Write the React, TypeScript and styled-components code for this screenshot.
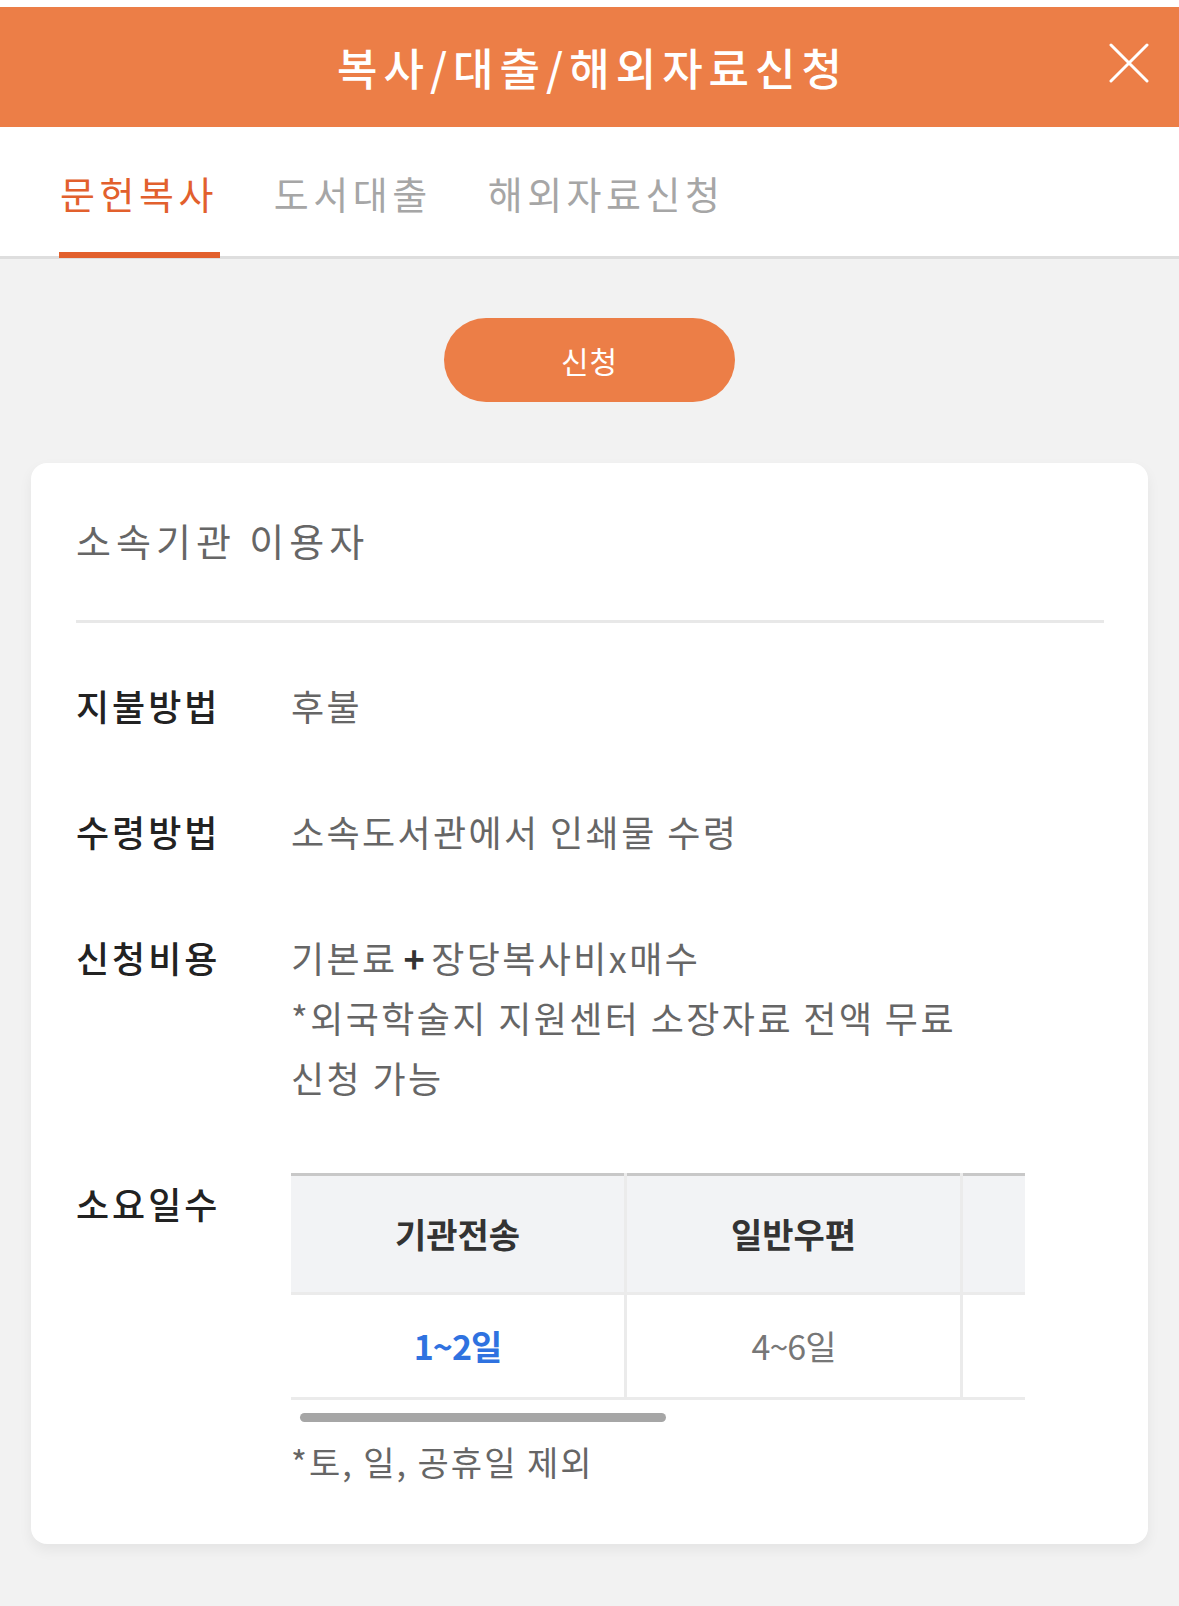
import React from 'react';
import styled, { createGlobalStyle } from 'styled-components';

const GlobalStyle = createGlobalStyle`
  html, body {
    margin: 0;
    padding: 0;
    background: #f2f2f2;
  }
  body {
    font-family: "Noto Sans CJK KR", "Noto Sans", sans-serif;
    -webkit-font-smoothing: antialiased;
  }
`;

const Page = styled.div`
  width: 1179px;
  min-height: 1606px;
  background: #f2f2f2;
  border-top: 7px solid #fff;
  box-sizing: border-box;
`;

const Header = styled.header`
  position: relative;
  height: 120px;
  background: #ec7e47;
  display: flex;
  align-items: center;
  justify-content: center;
`;

const Title = styled.h1`
  margin: 0 0 0 6px;
  color: #fff;
  font-size: 44px;
  font-weight: 500;
  letter-spacing: 6px;
  line-height: 1;
`;

const CloseButton = styled.button`
  position: absolute;
  right: 30px;
  top: 36px;
  width: 40px;
  height: 40px;
  padding: 0;
  border: 0;
  background: transparent;
  cursor: pointer;
`;

const TabBar = styled.nav`
  display: flex;
  gap: 56px;
  padding: 0 0 0 60px;
  height: 132px;
  background: #fff;
  border-bottom: 3px solid #dedede;
  box-sizing: border-box;
`;

const Tab = styled.div<{ $active?: boolean }>`
  position: relative;
  display: flex;
  align-items: center;
  height: 100%;
  font-size: 38px;
  letter-spacing: 4.5px;
  color: ${({ $active }) => ($active ? '#e2602d' : '#a6a6a6')};
  line-height: 1;
  padding-top: 2px;
  box-sizing: border-box;
  &::after {
    content: '';
    display: ${({ $active }) => ($active ? 'block' : 'none')};
    position: absolute;
    left: -1px;
    right: -2px;
    bottom: -2px;
    height: 6px;
    background: #e2602d;
  }
`;

const Body = styled.main`
  display: flex;
  flex-direction: column;
  align-items: center;
  padding: 59px 31px 0;
`;

const ApplyButton = styled.button`
  width: 291px;
  height: 84px;
  border: 0;
  border-radius: 42px;
  background: #ec7e47;
  color: #fff;
  font-family: inherit;
  font-size: 30px;
  letter-spacing: 1px;
  cursor: pointer;
`;

const Card = styled.section`
  align-self: stretch;
  margin-top: 61px;
  background: #fff;
  border-radius: 16px;
  box-shadow: 0 6px 14px rgba(0, 0, 0, 0.06);
  padding: 47px 44px 53px 45px;
`;

const CardTitle = styled.h2`
  margin: 0;
  font-size: 38px;
  font-weight: 400;
  letter-spacing: 5px;
  color: #666;
  line-height: 59px;
  padding-bottom: 51px;
  border-bottom: 3px solid #e8e8e8;
`;

const InfoList = styled.dl`
  margin: 52px 0 0;
  display: flex;
  flex-direction: column;
  gap: 66px;
`;

const InfoRow = styled.div`
  display: grid;
  grid-template-columns: 215px 1fr;
  font-size: 36px;
  line-height: 60px;
`;

const Label = styled.dt`
  font-weight: 500;
  letter-spacing: 3px;
  color: #222;
`;

const Value = styled.dd`
  margin: 0;
  color: #666;
  letter-spacing: 2.4px;
  max-width: 700px;
  word-break: keep-all;
`;

const Plus = styled.span`
  color: #333;
  font-weight: 700;
  margin: 0 4px 0 6px;
`;

const TableScroll = styled.div`
  width: 734px;
  overflow: hidden;
  letter-spacing: 0;
`;

const Table = styled.table`
  border-collapse: collapse;
  table-layout: fixed;
  width: 1002px;
  border-top: 3px solid #c8c8c8;
  border-bottom: 3px solid #ebebeb;
`;

const HeadCell = styled.th`
  width: 333px;
  height: 116px;
  padding: 0;
  background: #f2f3f5;
  font-size: 34px;
  font-weight: 700;
  color: #333;
  text-align: center;
  border-bottom: 3px solid #ebebeb;
  & + & {
    border-left: 3px solid #ebebeb;
  }
`;

const DayCell = styled.td<{ $highlight?: boolean }>`
  height: 102px;
  padding: 0;
  text-align: center;
  font-size: 34px;
  font-weight: ${({ $highlight }) => ($highlight ? 700 : 400)};
  color: ${({ $highlight }) => ($highlight ? '#2f72e0' : '#777')};
  letter-spacing: -1px;
  & + & {
    border-left: 3px solid #ebebeb;
  }
`;

const ScrollThumb = styled.div`
  width: 366px;
  height: 9px;
  margin: 13px 0 0 9px;
  border-radius: 5px;
  background: #a6a6a6;
`;

const Note = styled.p`
  margin: 10px 0 0;
  color: #666;
  font-size: 34px;
  letter-spacing: 2px;
  line-height: 59px;
`;

const App = (): React.ReactElement => {
  return (
    <React.Fragment>
      <GlobalStyle />
      <Page>
        <Header>
          <Title>복사/대출/해외자료신청</Title>
          <CloseButton aria-label="닫기">
            <svg width="40" height="40" viewBox="0 0 40 40">
              <path d="M2 2 L38 38 M38 2 L2 38" stroke="#fff" strokeWidth="3" strokeLinecap="round" />
            </svg>
          </CloseButton>
        </Header>
        <TabBar>
          <Tab $active>문헌복사</Tab>
          <Tab>도서대출</Tab>
          <Tab>해외자료신청</Tab>
        </TabBar>
        <Body>
          <ApplyButton>신청</ApplyButton>
          <Card>
            <CardTitle>소속기관 이용자</CardTitle>
            <InfoList>
              <InfoRow>
                <Label>지불방법</Label>
                <Value>후불</Value>
              </InfoRow>
              <InfoRow>
                <Label>수령방법</Label>
                <Value>소속도서관에서 인쇄물 수령</Value>
              </InfoRow>
              <InfoRow>
                <Label>신청비용</Label>
                <Value>
                  기본료<Plus>+</Plus>장당복사비x매수
                  <br />
                  *외국학술지 지원센터 소장자료 전액 무료 신청 가능
                </Value>
              </InfoRow>
              <InfoRow>
                <Label>소요일수</Label>
                <Value>
                  <TableScroll>
                    <Table>
                      <thead>
                        <tr>
                          <HeadCell>기관전송</HeadCell>
                          <HeadCell>일반우편</HeadCell>
                          <HeadCell />
                        </tr>
                      </thead>
                      <tbody>
                        <tr>
                          <DayCell $highlight>1~2일</DayCell>
                          <DayCell>4~6일</DayCell>
                          <DayCell />
                        </tr>
                      </tbody>
                    </Table>
                  </TableScroll>
                  <ScrollThumb />
                  <Note>*토, 일, 공휴일 제외</Note>
                </Value>
              </InfoRow>
            </InfoList>
          </Card>
        </Body>
      </Page>
    </React.Fragment>
  );
};

export default App;
